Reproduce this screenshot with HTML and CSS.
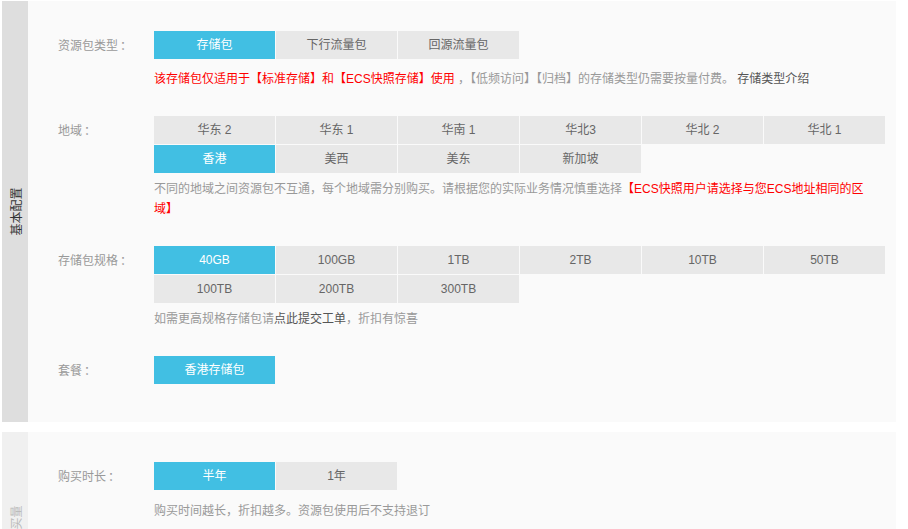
FILE: index.html
```html
<!DOCTYPE html>
<html lang="zh-CN">
<head>
    <meta charset="UTF-8">
    <title>存储包购买</title>
    <link rel="stylesheet" href="styles.css">
</head>
<body>
    <!-- 基本配置 -->
    <div class="panel">
        <div class="panel-side"><span>基本配置</span></div>
        <div class="panel-body">
            <div class="form-row">
                <div class="form-label">资源包类型<span class="colon">：</span></div>
                <div class="form-field">
                    <div class="options">
                        <a class="opt active">存储包</a>
                        <a class="opt">下行流量包</a>
                        <a class="opt">回源流量包</a>
                    </div>
                    <p class="tip"><span class="red">该存储包仅适用于【标准存储】和【ECS快照存储】使用</span> ，【低频访问】【归档】的存储类型仍需要按量付费。 <a class="link">存储类型介绍</a></p>
                </div>
            </div>

            <div class="form-row">
                <div class="form-label">地域<span class="colon">：</span></div>
                <div class="form-field">
                    <div class="options">
                        <a class="opt">华东 2</a>
                        <a class="opt">华东 1</a>
                        <a class="opt">华南 1</a>
                        <a class="opt">华北3</a>
                        <a class="opt">华北 2</a>
                        <a class="opt">华北 1</a>
                        <a class="opt active">香港</a>
                        <a class="opt">美西</a>
                        <a class="opt">美东</a>
                        <a class="opt">新加坡</a>
                    </div>
                    <p class="tip">不同的地域之间资源包不互通<span class="comma">，</span>每个地域需分别购买。请根据您的实际业务情况慎重选择<span class="red">【ECS快照用户请选择与您ECS地址相同的区<br>域】</span></p>
                </div>
            </div>

            <div class="form-row">
                <div class="form-label">存储包规格<span class="colon">：</span></div>
                <div class="form-field">
                    <div class="options">
                        <a class="opt active">40GB</a>
                        <a class="opt">100GB</a>
                        <a class="opt">1TB</a>
                        <a class="opt">2TB</a>
                        <a class="opt">10TB</a>
                        <a class="opt">50TB</a>
                        <a class="opt">100TB</a>
                        <a class="opt">200TB</a>
                        <a class="opt">300TB</a>
                    </div>
                    <p class="tip">如需更高规格存储包请<a class="link">点此提交工单</a><span class="comma">，</span>折扣有惊喜</p>
                </div>
            </div>

            <div class="form-row">
                <div class="form-label">套餐<span class="colon">：</span></div>
                <div class="form-field">
                    <div class="options">
                        <a class="opt active">香港存储包</a>
                    </div>
                </div>
            </div>
        </div>
    </div>

    <!-- 购买量 -->
    <div class="panel panel-light">
        <div class="panel-side"><span>购买量</span></div>
        <div class="panel-body">
            <div class="form-row">
                <div class="form-label">购买时长<span class="colon">：</span></div>
                <div class="form-field">
                    <div class="options">
                        <a class="opt active">半年</a>
                        <a class="opt">1年</a>
                    </div>
                    <p class="tip tip-loose">购买时间越长<span class="comma">，</span>折扣越多。资源包使用后不支持退订</p>
                </div>
            </div>
        </div>
    </div>
</body>
</html>
```

FILE: styles.css
```css
* {
    box-sizing: border-box;
    margin: 0;
    padding: 0;
}
body {
    background: #fff;
    font-family: "Liberation Sans", "Noto Sans CJK SC", sans-serif;
    font-size: 12px;
    color: #999;
    padding: 1px 12px 0 2px;
}
.panel {
    display: flex;
    background: #fafafa;
    margin-bottom: 10px;
}
.panel-side {
    width: 26px;
    flex-shrink: 0;
    background: #dedede;
    color: #333;
    display: flex;
    align-items: center;
    justify-content: center;
}
.panel-side span {
    display: block;
    white-space: nowrap;
    transform: rotate(-90deg);
    font-size: 12px;
}
.panel-light {
    min-height: 182px;
}
.panel-light .panel-side {
    background: #f0f0f0;
    color: #bbb;
}
.panel-body {
    flex: 1;
    padding: 30px 0 37px 30px;
}
.form-row {
    display: flex;
    margin-bottom: 27px;
}
.form-row:last-child {
    margin-bottom: 0;
}
.form-label {
    width: 96px;
    flex-shrink: 0;
    line-height: 28px;
    color: #999;
}
/* centred full-width punctuation */
.colon,
.comma {
    font-family: "Noto Sans CJK TC", sans-serif;
}
.colon {
    margin-left: 2px;
}
.form-field {
    width: 732px;
}
.options {
    display: flex;
    flex-wrap: wrap;
    margin-bottom: -1px;
}
.opt {
    width: 121px;
    height: 28px;
    line-height: 28px;
    margin: 0 1px 1px 0;
    text-align: center;
    background: #e8e8e8;
    color: #666;
    cursor: pointer;
}
.opt.active {
    background: #41bfe3;
    color: #fff;
}
.tip {
    margin-top: 5px;
    line-height: 20px;
    color: #999;
}
.form-row:first-child .tip {
    margin-top: 10px;
}
.tip-loose {
    margin-top: 10px;
}
.red {
    color: #f00;
}
.link {
    color: #555;
    cursor: pointer;
}
```
